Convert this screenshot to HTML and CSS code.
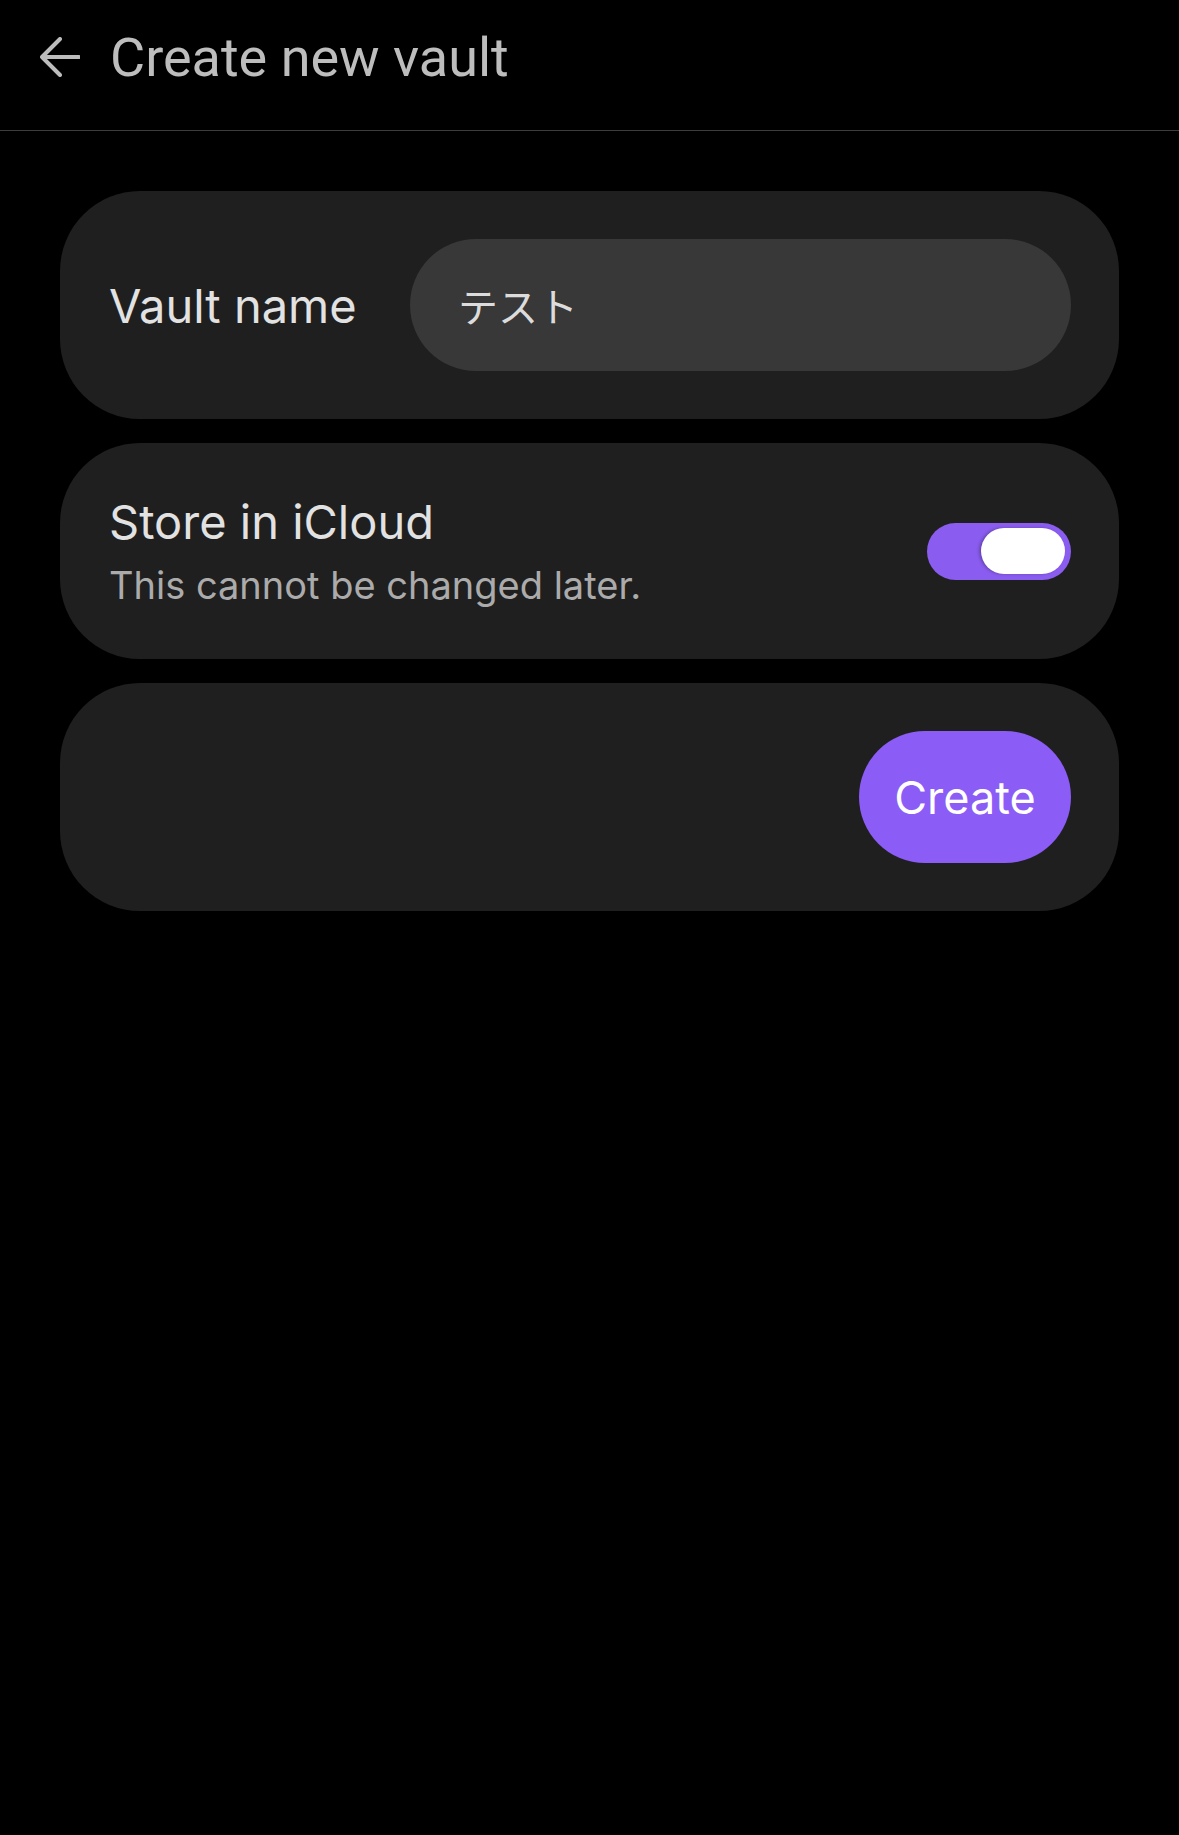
FILE: index.html
```html
<html>
  <head>
    <title>Create new vault</title>
    <link rel="stylesheet" href="styles.css">
  </head>
  <body>
    <header class="topbar">
      <svg class="back" viewBox="0 0 40 40" width="40" height="40">
        <path d="M39 20 H2 M20 2 L2 20 L20 38" fill="none" stroke="#bdbdbd" stroke-width="4" stroke-linecap="round" stroke-linejoin="round" />
      </svg>
      <h1>Create new vault</h1>
    </header>
    <main>
      <section class="card name-card">
        <label class="label">Vault name</label>
        <div class="input">テスト</div>
      </section>
      <section class="card icloud-card">
        <div class="text">
          <div class="title">Store in iCloud</div>
          <div class="hint">This cannot be changed later.</div>
        </div>
        <div class="toggle"><span class="thumb"></span></div>
      </section>
      <section class="card action-card">
        <button class="create">Create</button>
      </section>
    </main>
  </body>
</html>
```
FILE: styles.css
```css
body {
  margin: 0;
  background: #000;
  font-family: Inter, "Noto Sans CJK JP", sans-serif;
  color: #e2e2e2;
}
.topbar {
  display: flex;
  align-items: flex-start;
  gap: 30px;
  height: 131px;
  padding: 37px 0 0 40px;
  box-sizing: border-box;
  border-bottom: 1px solid #3d3d3d;
}
.topbar h1 {
  margin: 0;
  margin-top: -11px;
  font-family: Roboto, sans-serif;
  font-size: 54px;
  font-weight: 400;
  color: #bdbdbd;
  line-height: 64px;
}
.back {
  flex: none;
}
main {
  display: flex;
  flex-direction: column;
  gap: 24px;
  padding: 60px 60px 0;
}
.card {
  display: flex;
  align-items: center;
  background: #1f1f1f;
  border-radius: 80px;
  padding: 0 48px 0 49px;
}
.name-card {
  height: 228px;
}
.label {
  width: 301px;
  flex: none;
  font-size: 47px;
  color: #e2e2e2;
}
.input {
  flex: 1;
  height: 132px;
  border-radius: 66px;
  background: #383838;
  display: flex;
  align-items: center;
  padding-left: 48px;
  font-size: 40px;
  color: #dcdcdc;
  font-family: "Noto Sans CJK JP", sans-serif;
}
.icloud-card {
  height: 216px;
  justify-content: space-between;
}
.title {
  font-size: 47px;
  line-height: 56px;
  color: #e2e2e2;
}
.hint {
  margin-top: 11px;
  font-size: 38px;
  line-height: 48px;
  color: #ababab;
}
.toggle {
  width: 144px;
  height: 57px;
  border-radius: 29px;
  background: #8a5cef;
  display: flex;
  align-items: center;
  justify-content: flex-end;
  padding-right: 6px;
  box-sizing: border-box;
}
.thumb {
  width: 84px;
  height: 46px;
  border-radius: 23px;
  background: #fff;
  box-shadow: -2px 0 3px rgba(0, 0, 0, 0.25);
}
.action-card {
  height: 228px;
  justify-content: flex-end;
}
.create {
  width: 212px;
  height: 132px;
  border: none;
  border-radius: 66px;
  background: #8b5cf6;
  color: #fff;
  font-family: Inter, sans-serif;
  font-size: 45px;
  padding: 0;
}
```
